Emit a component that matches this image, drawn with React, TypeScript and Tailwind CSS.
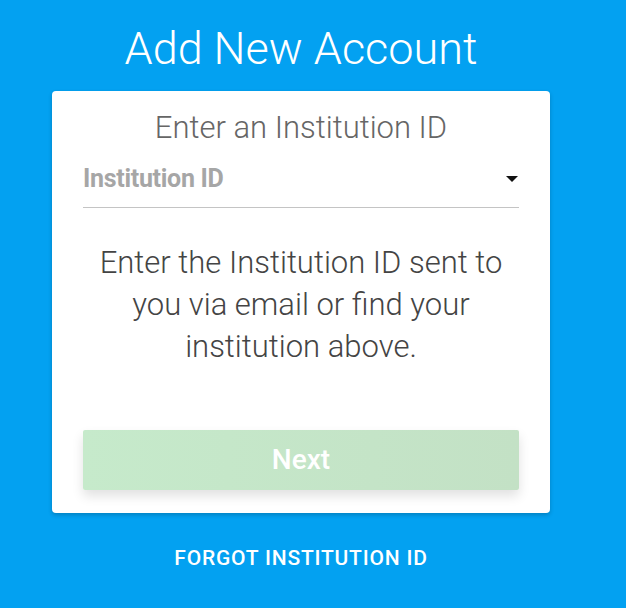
export default function App() {
  return (
    <div className="h-[608px] w-full overflow-hidden bg-[#03a1f1] font-['Roboto',sans-serif]">
      <div className="ml-[52px] flex w-[498px] flex-col items-center">
        <h1 className="mt-[23px] text-[45px] leading-[52px] font-light text-white">Add New Account</h1>
        <div className="mt-[16px] flex w-full flex-col items-center rounded-[4px] bg-white px-[31px] pt-[19px] pb-[23px] shadow-[0_2px_4px_rgba(0,0,0,0.2)]">
          <h2 className="text-[31px] leading-[36px] font-light text-[#666]">Enter an Institution ID</h2>
          <div className="mt-[18px] flex w-full items-center justify-between border-b border-[#c4c4c4] pb-[13px]">
            <span className="text-[25px] leading-[30px] font-bold tracking-[-0.3px] text-[#a6a6a6]">Institution ID</span>
            <svg width="12" height="6" viewBox="0 0 12 6" className="mr-[1px]">
              <path d="M0 0h12L6 6z" fill="#111" />
            </svg>
          </div>
          <p className="mt-[34px] text-center text-[31px] leading-[42px] font-light text-[#444]">
            Enter the Institution ID sent to
            <br />
            you via email or find your
            <br />
            institution above.
          </p>
          <button className="mt-[62px] flex h-[60px] w-full items-center justify-center rounded-[2px] bg-gradient-to-r from-[#c6eacb] to-[#c3e1c5] text-[28px] font-medium text-white shadow-[0_6px_12px_rgba(0,0,0,0.12)]">
            Next
          </button>
        </div>
        <div className="mt-[33px] text-[21px] leading-[24px] font-medium tracking-[0.8px] text-white">FORGOT INSTITUTION ID</div>
      </div>
    </div>
  )
}
